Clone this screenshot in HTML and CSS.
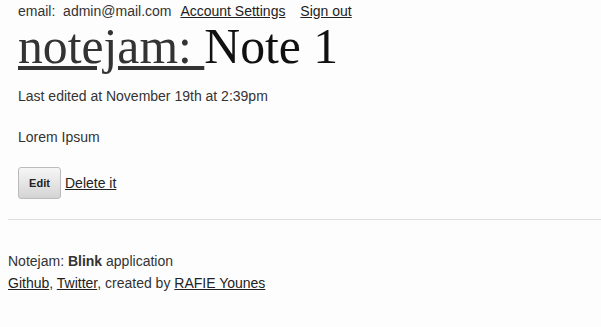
FILE: index.html
```html
<!DOCTYPE html>
<html lang="en">

<head>
    <meta charset="UTF-8">
    <title>Note 1 | notejam</title>
    <link rel="stylesheet" href="styles.css">
</head>

<body>
    <div class="container">
        <div class="user-bar">
            email:&nbsp; admin@mail.com
            <a href="#">Account Settings</a>
            <a href="#" class="signout">Sign out</a>
        </div>
        <h1 class="title"><a href="#">notejam: </a>Note 1</h1>
        <p class="edited">Last edited at November 19th at 2:39pm</p>
        <p class="note-text">Lorem Ipsum</p>
        <div class="actions">
            <button class="btn">Edit</button>
            <a href="#">Delete it</a>
        </div>
    </div>
    <hr class="sep">
    <div class="footer">
        <p>Notejam: <b>Blink</b> application</p>
        <p><a href="#">Github</a>, <a href="#">Twitter</a>, created by <a href="#">RAFIE Younes</a></p>
    </div>
</body>

</html>
```

FILE: styles.css
```css
body {
    margin: 0 0 0 8px;
    background-color: #fdfdfd;
    color: #333;
    font-family: "Liberation Sans", Arial, sans-serif;
    font-size: 14px;
    line-height: 17px;
}

a {
    color: #222;
    text-decoration: underline;
}

p {
    margin: 0;
}

.container {
    padding: 0 10px;
}

.user-bar {
    padding-top: 3px;
}

.user-bar a {
    margin-left: 5px;
}

.user-bar .signout {
    margin-left: 11px;
}

.title {
    font-family: "Liberation Serif", Georgia, serif;
    font-weight: normal;
    font-size: 49.7px;
    line-height: 52px;
    margin: 1px 0 0;
    color: #111;
}

.title a {
    color: #333;
}

.edited {
    margin-top: 15px;
}

.note-text {
    margin-top: 24px;
}

.actions {
    margin-top: 21px;
    display: flex;
    align-items: center;
    gap: 4px;
}

.btn {
    font-family: "Liberation Sans", Arial, sans-serif;
    font-size: 11px;
    font-weight: bold;
    color: #222;
    width: 43px;
    height: 32px;
    border: 1px solid #bbb;
    border-radius: 3px;
    background: linear-gradient(#f6f6f6, #d4d4d4);
}

.sep {
    border: 0;
    border-top: 1px solid #ddd;
    margin: 20px 0 0;
}

.footer {
    margin-top: 30px;
    line-height: 22px;
}
```
